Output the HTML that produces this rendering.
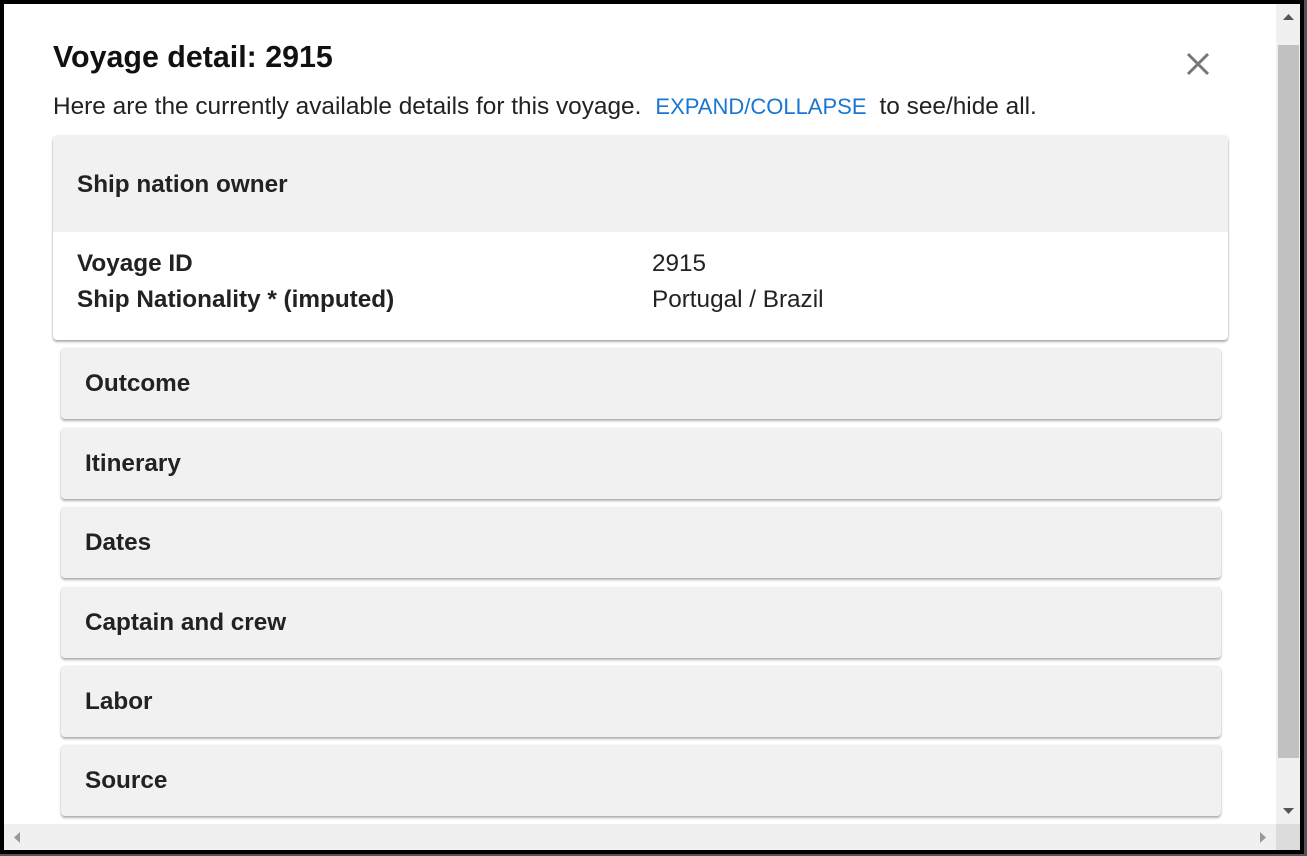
<!DOCTYPE html>
<html><head><style>
*{box-sizing:border-box;margin:0;padding:0}
body{width:1307px;height:856px;background:#555;position:relative;overflow:hidden;font-family:"Liberation Sans",Arial,sans-serif;color:#222}
.outer{position:absolute;left:0;top:0;width:1304px;height:854px;background:#000}
.win{position:absolute;left:4px;top:4px;width:1296px;height:846px;background:#fff;overflow:hidden}
h1{position:absolute;left:49px;top:36px;font-size:30.4px;font-weight:bold;color:#111}
.intro{position:absolute;left:49px;top:89px;font-size:24.4px;color:#222;white-space:nowrap}
.intro span{color:#1976d2;font-size:22px;margin:0 13px 0 14px}
.close{position:absolute;left:1182px;top:48px}
.card{position:absolute;left:49px;top:132px;width:1175px;height:204px;background:#fff;border-radius:4px;box-shadow:0 2px 2px rgba(0,0,0,.3),0 0 2px rgba(0,0,0,.15);overflow:hidden}
.card .hd{height:96px;background:#f1f1f1;padding:35px 24px;font-weight:bold;font-size:24.3px}
.row{position:absolute;left:24px;font-size:24.3px}
.row b{display:inline-block;width:575px}
.it{position:absolute;left:57px;width:1160px;height:71px;background:#f1f1f1;border-radius:4px;box-shadow:0 2px 2px rgba(0,0,0,.3),0 0 1px rgba(0,0,0,.15);font-weight:bold;font-size:24.3px;padding:22px 24px}
.vs{position:absolute;left:1272px;top:0;width:24px;height:820px;background:#f0f0f0}
.thumb{position:absolute;left:2px;top:41px;width:21px;height:713px;background:#c1c1c1}
.hs{position:absolute;left:0;top:820px;width:1272px;height:26px;background:#f0f0f0}
.corner{position:absolute;left:1272px;top:820px;width:24px;height:26px;background:#dcdcdc}
</style></head><body>
<div class="outer"></div>
<div class="win">
<h1>Voyage detail: 2915</h1>
<div class="intro">Here are the currently available details for this voyage.<span>EXPAND/COLLAPSE</span>to see/hide all.</div>
<svg class="close" width="24" height="24" viewBox="0 0 24 24"><path d="M2 2L22 22M22 2L2 22" stroke="#777" stroke-width="3"/></svg>
<div class="card"><div class="hd">Ship nation owner</div>
<div class="row" style="top:114px"><b>Voyage ID</b>2915</div>
<div class="row" style="top:150px"><b>Ship Nationality * (imputed)</b>Portugal / Brazil</div>
</div>
<div class="it" style="top:344px">Outcome</div>
<div class="it" style="top:424px">Itinerary</div>
<div class="it" style="top:503px">Dates</div>
<div class="it" style="top:583px">Captain and crew</div>
<div class="it" style="top:662px">Labor</div>
<div class="it" style="top:741px">Source</div>
<div class="vs"><div class="thumb"></div>
<svg style="position:absolute;left:7px;top:10px" width="11" height="6"><path d="M0 6L5.5 0L11 6Z" fill="#555"/></svg>
<svg style="position:absolute;left:7px;top:804px" width="11" height="6"><path d="M0 0L5.5 6L11 0Z" fill="#555"/></svg>
</div>
<div class="hs">
<svg style="position:absolute;left:10px;top:8px" width="6" height="11"><path d="M6 0L0 5.5L6 11Z" fill="#999"/></svg>
<svg style="position:absolute;left:1256px;top:8px" width="6" height="11"><path d="M0 0L6 5.5L0 11Z" fill="#999"/></svg>
</div>
<div class="corner"></div>
</div>
</body></html>
